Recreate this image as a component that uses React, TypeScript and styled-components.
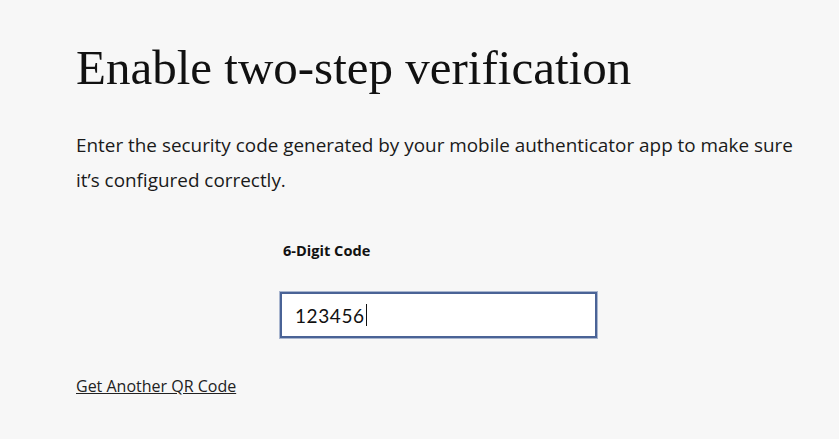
import React from "react";
import styled, { createGlobalStyle } from "styled-components";

const Global = createGlobalStyle`
  html, body { margin: 0; padding: 0; background: #f7f7f7; }
  body { font-family: "Open Sans", "Noto Sans", sans-serif; color: #111; }
`;

const Page = styled.main`
  padding: 36px 38px 0 76px;
  display: flex;
  flex-direction: column;
`;

const Heading = styled.h1`
  margin: 0;
  font-family: "Liberation Serif", "DejaVu Serif", serif;
  font-weight: 400;
  font-size: 49px;
  line-height: 64px;
  color: #111;
`;

const Intro = styled.p`
  margin: 28px 0 0;
  font-size: 18.9px;
  line-height: 35px;
  color: #1a1a1a;
`;

const Form = styled.div`
  align-self: center;
  width: 317px;
  margin-top: 42px;
  display: flex;
  flex-direction: column;
`;

const Label = styled.label`
  padding-left: 3px;
  font-size: 14.6px;
  font-weight: 700;
  color: #111;
`;

const Field = styled.div`
  margin-top: 32px;
  height: 46px;
  box-sizing: border-box;
  background: #fff;
  border: 2px solid #4a6396;
  box-shadow: 0 0 0 1px #a9b6cf;
  display: flex;
  align-items: center;
  padding-left: 13px;
  font-family: "Lato", "Open Sans", sans-serif;
  font-size: 19px;
  letter-spacing: 0.6px;
  color: #111;
`;

const Caret = styled.span`
  display: inline-block;
  width: 1px;
  height: 22px;
  background: #111;
  margin-left: 1px;
`;

const Link = styled.a`
  margin-top: 37px;
  align-self: flex-start;
  font-size: 16px;
  color: #222;
  text-decoration: underline;
`;

export default function App() {
  return (
    <>
      <Global />
      <Page>
        <Heading>Enable two-step verification</Heading>
        <Intro>
          Enter the security code generated by your mobile authenticator app to make sure
          it’s configured correctly.
        </Intro>
        <Form>
          <Label>6-Digit Code</Label>
          <Field>
            123456
            <Caret />
          </Field>
        </Form>
        <Link href="#">Get Another QR Code</Link>
      </Page>
    </>
  );
}
